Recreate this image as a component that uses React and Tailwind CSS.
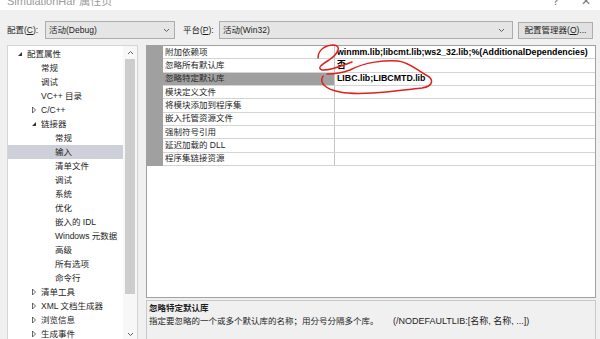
import React from 'react';

const tree = [
  { t: '配置属性', lv: 0, arrow: 'open' },
  { t: '常规', lv: 1 },
  { t: '调试', lv: 1 },
  { t: 'VC++ 目录', lv: 1 },
  { t: 'C/C++', lv: 1, arrow: 'closed' },
  { t: '链接器', lv: 1, arrow: 'open' },
  { t: '常规', lv: 2 },
  { t: '输入', lv: 2, sel: true },
  { t: '清单文件', lv: 2 },
  { t: '调试', lv: 2 },
  { t: '系统', lv: 2 },
  { t: '优化', lv: 2 },
  { t: '嵌入的 IDL', lv: 2 },
  { t: 'Windows 元数据', lv: 2 },
  { t: '高级', lv: 2 },
  { t: '所有选项', lv: 2 },
  { t: '命令行', lv: 2 },
  { t: '清单工具', lv: 1, arrow: 'closed' },
  { t: 'XML 文档生成器', lv: 1, arrow: 'closed' },
  { t: '浏览信息', lv: 1, arrow: 'closed' },
  { t: '生成事件', lv: 1, arrow: 'closed' },
];

const indent = ['pl-[5px]', 'pl-[19px]', 'pl-[33px]'];

const props = [
  { n: '附加依赖项', v: 'winmm.lib;libcmt.lib;ws2_32.lib;%(AdditionalDependencies)' },
  { n: '忽略所有默认库', v: '否' },
  { n: '忽略特定默认库', v: 'LIBC.lib;LIBCMTD.lib', sel: true },
  { n: '模块定义文件' },
  { n: '将模块添加到程序集' },
  { n: '嵌入托管资源文件' },
  { n: '强制符号引用' },
  { n: '延迟加载的 DLL' },
  { n: '程序集链接资源' },
];

const Arrow = ({ kind }) => {
  if (kind === 'open')
    return (
      <svg width="6" height="6" viewBox="0 0 6 6">
        <polygon points="5,1 5,5 1,5" fill="#333" />
      </svg>
    );
  if (kind === 'closed')
    return (
      <svg width="6" height="8" viewBox="0 0 6 8">
        <polygon points="1.5,1 4.5,4 1.5,7" fill="none" stroke="#555" strokeWidth="0.9" />
      </svg>
    );
  return null;
};

const Chevron = ({ up }) => (
  <svg width="7" height="5" viewBox="0 0 7 5">
    <polyline points={up ? '1,4 3.5,1.5 6,4' : '1,1 3.5,3.5 6,1'} fill="none" stroke="#606060" strokeWidth="1" />
  </svg>
);

export default function App() {
  return (
    <div className="relative w-[600px] h-[339px] overflow-hidden bg-[#f0f0f0] text-[#1e1e1e] text-[8.5px] font-['Liberation_Sans','Noto_Sans_CJK_SC',sans-serif]">
      {/* title bar, mostly scrolled off */}
      <div className="h-[10px] bg-white flex items-start justify-between pl-[7px] pr-[9px] overflow-hidden">
        <span className="-mt-[7px] text-[11px] text-[#9a9a9a]">SimulationHar 属性页</span>
        <div className="flex gap-[22px] -mt-[8px] text-[12px] text-[#777]">
          <span>?</span>
          <span>✕</span>
        </div>
      </div>

      {/* config row */}
      <div className="mt-[11px] flex items-center h-[18px] pl-[7px]">
        <span className="w-[38px]">配置(<u>C</u>):</span>
        <div className="w-[130px] h-[18px] flex items-center justify-between bg-[#e5e5e5] border border-[#acacac] pl-[3px] pr-[4px]">
          <span>活动(Debug)</span>
          <Chevron />
        </div>
        <span className="ml-[8px] w-[36px]">平台(<u>P</u>):</span>
        <div className="w-[294px] h-[18px] flex items-center justify-between bg-[#e5e5e5] border border-[#acacac] pl-[3px] pr-[7px]">
          <span>活动(Win32)</span>
          <Chevron />
        </div>
        <div className="ml-[5px] w-[75px] h-[17px] flex items-center justify-center bg-[#e1e1e1] border border-[#adadad]">
          配置管理器(<u>O</u>)...
        </div>
      </div>

      {/* body */}
      <div className="mt-[6px] flex pl-[7px]">
        {/* tree */}
        <div className="w-[131px] h-[297px] flex bg-white border border-[#d5d5d5]">
          <div className="flex-1 pt-[1px] overflow-hidden">
            {tree.map((it, i) => (
              <div
                key={i}
                className={`h-[14px] flex items-center whitespace-nowrap ${indent[it.lv]} ${it.sel ? 'bg-[#cdd0d8]' : ''}`}
              >
                <span className="w-[14px] flex items-center justify-center">
                  <Arrow kind={it.arrow} />
                </span>
                <span>{it.t}</span>
              </div>
            ))}
          </div>
          <div className="w-[14px] flex flex-col bg-[#f7f7f7]">
            <div className="h-[13px] flex items-center justify-center">
              <Chevron up />
            </div>
            <div className="h-[235px] mx-[2px] bg-[#cdcdcd]" />
            <div className="flex-1" />
            <div className="h-[14px] flex items-center justify-center">
              <Chevron />
            </div>
          </div>
        </div>

        {/* property grid + description */}
        <div className="ml-[8px] w-[450px] flex flex-col">
          <div className="h-[253px] bg-white border border-[#a0a0a0]">
            <div className="flex">
              <div className="w-[16px] bg-[#a0a0a0]" />
              <div className="flex-1">
                {props.map((p, i) => (
                  <div key={i} className="h-[13.33px] flex border-b border-[#d4d4d4]">
                    <div className={`w-[171px] pl-[2px] flex items-center whitespace-nowrap ${p.sel ? 'bg-[#a0a0a0] text-[#2a2a2a]' : ''}`}>
                      {p.n}
                    </div>
                    <div className="flex-1 pl-[2px] flex items-center whitespace-nowrap overflow-hidden border-l border-[#c4c4c4] font-bold text-[8.8px] text-black">
                      {p.v || ''}
                    </div>
                  </div>
                ))}
              </div>
            </div>
          </div>
          <div className="mt-[2px] h-[45px] bg-[#f0f0f0] border border-[#c8c8c8] pl-[2px] pt-[1px]">
            <div className="h-[13px] flex items-center font-bold">忽略特定默认库</div>
            <div className="h-[13px] flex items-center whitespace-nowrap">
              <span className="w-[244px]">指定要忽略的一个或多个默认库的名称；用分号分隔多个库。</span>
              <span className="text-[9px]">(/NODEFAULTLIB:[名称, 名称, ...])</span>
            </div>
          </div>
        </div>
      </div>

      {/* red hand-drawn marks */}
      <svg className="absolute inset-0 pointer-events-none" width="600" height="339" viewBox="0 0 600 339">
        <path
          d="M 318 58 C 318 50, 325 45, 334 45 C 342 46, 338 54, 329 60 C 321 65, 317 68, 322 70 C 330 71, 344 65, 352 62"
          fill="none"
          stroke="#e0201c"
          strokeWidth="1.5"
          strokeLinecap="round"
        />
        <path
          d="M 323 76 C 319 83, 325 89, 340 92 C 360 96, 395 91, 422 88 C 434 86, 434 79, 426 75 C 416 69, 408 62, 398 61 C 385 60, 365 62, 350 70 C 342 73, 333 74, 327 74"
          fill="none"
          stroke="#e0201c"
          strokeWidth="1.5"
          strokeLinecap="round"
        />
      </svg>
    </div>
  );
}
